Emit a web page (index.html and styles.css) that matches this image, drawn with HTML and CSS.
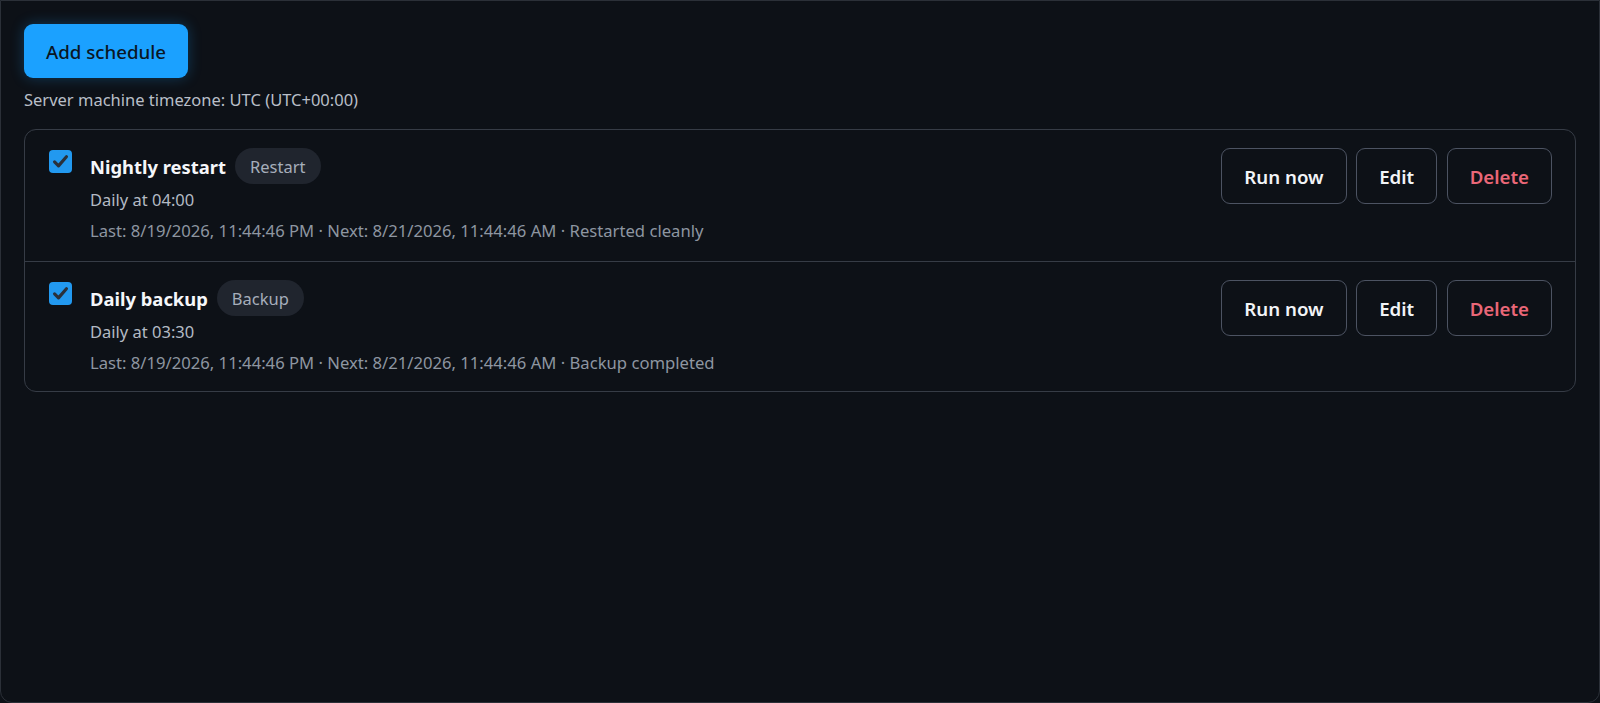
FILE: index.html
```html
<!DOCTYPE html>
<html lang="en">
<head>
<meta charset="utf-8">
<title>Schedules</title>
<link rel="stylesheet" href="styles.css">
</head>
<body>
<div class="panel">
  <button class="btn-primary">Add schedule</button>
  <div class="tz">Server machine timezone: UTC (UTC+00:00)</div>
  <div class="card">
    <div class="row">
      <div class="left">
        <span class="check"><svg viewBox="0 0 24 24" width="19" height="19"><path d="M4.5 12.5 L9.5 17.5 L19.5 6" fill="none" stroke="#2a313b" stroke-width="4" stroke-linecap="round" stroke-linejoin="round"/></svg></span>
        <div class="info">
          <div class="title-line"><span class="title">Nightly restart</span><span class="badge">Restart</span></div>
          <div class="sched">Daily at 04:00</div>
          <div class="meta">Last: 8/19/2026, 11:44:46 PM · Next: 8/21/2026, 11:44:46 AM · Restarted cleanly</div>
        </div>
      </div>
      <div class="actions">
        <button class="btn">Run now</button>
        <button class="btn">Edit</button>
        <button class="btn danger">Delete</button>
      </div>
    </div>
    <div class="row">
      <div class="left">
        <span class="check"><svg viewBox="0 0 24 24" width="19" height="19"><path d="M4.5 12.5 L9.5 17.5 L19.5 6" fill="none" stroke="#2a313b" stroke-width="4" stroke-linecap="round" stroke-linejoin="round"/></svg></span>
        <div class="info">
          <div class="title-line"><span class="title">Daily backup</span><span class="badge">Backup</span></div>
          <div class="sched">Daily at 03:30</div>
          <div class="meta">Last: 8/19/2026, 11:44:46 PM · Next: 8/21/2026, 11:44:46 AM · Backup completed</div>
        </div>
      </div>
      <div class="actions">
        <button class="btn">Run now</button>
        <button class="btn">Edit</button>
        <button class="btn danger">Delete</button>
      </div>
    </div>
  </div>
</div>
</body>
</html>
```
FILE: styles.css
```css
* { box-sizing: border-box; }
html, body { margin: 0; height: 100%; }
body {
  background: #0d1117;
  font-family: "Noto Sans", "Open Sans", sans-serif;
  color: #e6edf3;
}
.panel {
  min-height: 100vh;
  border: 1px solid #2b3038;
  border-radius: 0 0 12px 12px;
  padding: 23px 23px;
}
.btn-primary {
  display: block;
  height: 54px;
  padding: 0 22px;
  border: none;
  border-radius: 9px;
  background: #1ba1ff;
  color: #0a1624;
  font-family: inherit;
  font-size: 18.7px;
  font-weight: 500;
  box-shadow: 0 0 14px rgba(27, 161, 255, 0.28);
}
.tz {
  margin-top: 11px;
  font-size: 16.5px;
  color: #b9bfc8;
  line-height: 22px;
}
.card {
  margin-top: 18px;
  border: 1px solid #363c46;
  border-radius: 12px;
}
.row {
  display: flex;
  justify-content: space-between;
  align-items: flex-start;
  padding: 18px 23px 19px 24px;
}
.row:last-child { padding-bottom: 17px; }
.row + .row { border-top: 1px solid #363c46; }
.left { display: flex; align-items: flex-start; gap: 18px; }
.check {
  width: 23px;
  height: 23px;
  margin-top: 2px;
  border-radius: 4px;
  background: #2299f0;
  display: flex;
  align-items: center;
  justify-content: center;
}
.info { display: flex; flex-direction: column; }
.title-line { display: flex; align-items: center; gap: 9px; }
.title { font-size: 18.4px; font-weight: 700; color: #f5f7fa; }
.badge {
  height: 36px;
  padding: 0 15px;
  border-radius: 18px;
  background: #20252e;
  color: #a6aebb;
  font-size: 16.5px;
  display: flex;
  align-items: center;
}
.sched { margin-top: 5px; font-size: 16.5px; color: #b3bac4; line-height: 22px; }
.meta { margin-top: 9px; font-size: 16.65px; color: #8e96a1; line-height: 22px; }
.actions { display: flex; gap: 9.5px; }
.btn {
  height: 56px;
  padding: 0 22px;
  background: transparent;
  border: 1px solid #4c5362;
  border-radius: 9px;
  color: #f2f4f7;
  font-family: inherit;
  font-size: 18.7px;
  font-weight: 600;
}
.btn.danger { color: #ea6778; }
```
